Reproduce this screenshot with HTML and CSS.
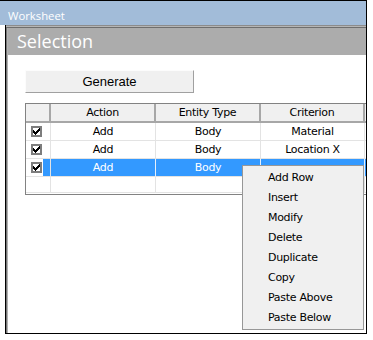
FILE: index.html
```html
<!DOCTYPE html>
<html>
<head>
<meta charset="utf-8">
<link rel="stylesheet" href="styles.css">
</head>
<body>
<div class="window">
  <div class="titlebar">Worksheet</div>
  <div class="panel">
    <div class="panel-edge"></div>
    <div class="panel-head">Selection</div>
    <div class="panel-body">
      <button class="btn">Generate</button>
      <div class="grid">
        <div class="row head">
          <div class="c w0"></div>
          <div class="c w1">Action</div>
          <div class="c w2">Entity Type</div>
          <div class="c w3">Criterion</div>
          <div class="c w4"></div>
        </div>
        <div class="row">
          <div class="c w0 chk"><span class="cb"><svg width="7" height="7" viewBox="0 0 7 7"><path d="M6 0h1v1h-1zM5 1h2v1h-2zM0 2h1v1h-1zM4 2h3v1h-3zM0 3h2v1h-2zM3 3h3v1h-3zM0 4h5v1h-5zM1 5h3v1h-3zM2 6h1v1h-1z" fill="#000"/></svg></span></div>
          <div class="c w1">Add</div>
          <div class="c w2">Body</div>
          <div class="c w3">Material</div>
          <div class="c w4"></div>
        </div>
        <div class="row">
          <div class="c w0 chk"><span class="cb"><svg width="7" height="7" viewBox="0 0 7 7"><path d="M6 0h1v1h-1zM5 1h2v1h-2zM0 2h1v1h-1zM4 2h3v1h-3zM0 3h2v1h-2zM3 3h3v1h-3zM0 4h5v1h-5zM1 5h3v1h-3zM2 6h1v1h-1z" fill="#000"/></svg></span></div>
          <div class="c w1">Add</div>
          <div class="c w2">Body</div>
          <div class="c w3">Location X</div>
          <div class="c w4"></div>
        </div>
        <div class="row sel">
          <div class="c w0 chk"><span class="cb"><svg width="7" height="7" viewBox="0 0 7 7"><path d="M6 0h1v1h-1zM5 1h2v1h-2zM0 2h1v1h-1zM4 2h3v1h-3zM0 3h2v1h-2zM3 3h3v1h-3zM0 4h5v1h-5zM1 5h3v1h-3zM2 6h1v1h-1z" fill="#000"/></svg></span></div>
          <div class="c w1">Add</div>
          <div class="c w2">Body</div>
          <div class="c w3"></div>
          <div class="c w4"></div>
        </div>
        <div class="row empty">
          <div class="c w0"></div>
          <div class="c w1"></div>
          <div class="c w2"></div>
          <div class="c w3"></div>
          <div class="c w4"></div>
        </div>
      </div>
    </div>
  </div>
</div>
<div class="menu">
  <div class="mi">Add Row</div>
  <div class="mi">Insert</div>
  <div class="mi">Modify</div>
  <div class="mi">Delete</div>
  <div class="mi">Duplicate</div>
  <div class="mi">Copy</div>
  <div class="mi">Paste Above</div>
  <div class="mi">Paste Below</div>
</div>
</body>
</html>
```
FILE: styles.css
```css
html, body {
  margin: 0;
  padding: 0;
  background: #fff;
}
body {
  width: 373px;
  height: 340px;
  position: relative;
  overflow: hidden;
}
.window {
  width: 366px;
  border-top: 1px solid #000;
  border-right: 1px solid #000;
}
.titlebar {
  height: 19px;
  padding-top: 5px;
  line-height: 19px;
  padding-left: 8px;
  background: #a2bcd9;
  color: #fff;
  font-family: "Open Sans", sans-serif;
  font-size: 11.3px;
}
.panel {
  margin-left: 5px;
  border-left: 1px solid #000;
  border-bottom: 1px solid #000;
  height: 308px;
  padding-left: 2px;
  background: linear-gradient(to right, #767676 0 1px, #b2b2b2 1px 2px);
  display: flex;
  flex-direction: column;
}
.panel-edge {
  height: 3px;
  margin-left: -2px;
  background: linear-gradient(#8c8c8c 0 1px, #b5b5b5 1px 2px, #6e6e6e 2px 3px);
}
.panel-head {
  height: 27px;
  line-height: 27px;
  padding-left: 9px;
  background: #acacac;
  color: #fff;
  font-family: "Open Sans", sans-serif;
  font-size: 18px;
}
.panel-body {
  flex: 1;
  background: #fff;
  padding: 15px 0 0 17px;
  overflow: hidden;
}
.btn {
  display: block;
  width: 169px;
  height: 23px;
  padding: 0;
  margin: 0;
  background: #f0f0f0;
  border: 1px solid;
  border-color: #fcfcfc #a0a0a0 #a0a0a0 #fcfcfc;
  font-family: "Liberation Sans", Arial, sans-serif;
  font-size: 13px;
  color: #000;
}
.grid {
  margin-top: 10px;
  width: 400px;
  height: 90px;
  border: 1px solid #828282;
  border-right: none;
  overflow: hidden;
  font-family: "DejaVu Sans", sans-serif;
  font-size: 11px;
  letter-spacing: -0.3px;
  color: #000;
}
.row {
  display: flex;
  height: 18px;
}
.row.head { height: 19px; }
.row.empty { height: 16px; }
.c {
  flex: none;
  box-sizing: border-box;
  border-right: 1px solid #e3e3e3;
  border-bottom: 1px solid #e3e3e3;
  text-align: center;
  padding-top: 1px;
  line-height: 16px;
  white-space: nowrap;
  overflow: hidden;
}
.w0 { width: 25px; }
.w1 { width: 105px; }
.w2 { width: 105px; }
.w3 { width: 104px; }
.w4 { width: 61px; }
.head .c {
  background: #f0f0f0;
  border-right: 2px solid #a7a7a7;
  border-bottom: 2px solid #a7a7a7;
}
.empty .c { line-height: 14px; }
.chk {
  display: flex;
  align-items: center;
  padding-left: 5px;
  padding-top: 0;
}
.cb {
  display: block;
  width: 7px;
  height: 7px;
  border: 2px solid #7d7d7d;
  background: #fff;
}
.cb svg { display: block; }
.sel .c {
  background: #3399ff;
  color: #fff;
  border-right-color: #e6f0fb;
}
.sel .chk {
  background: linear-gradient(to right, #fff 17px, #3399ff 17px);
  border-right-color: #e3e3e3;
}
.menu {
  position: absolute;
  left: 242px;
  top: 165px;
  width: 122px;
  box-sizing: border-box;
  border: 1px solid #979797;
  background: #f0f0f0;
  padding: 2px 0 1px;
  font-family: "DejaVu Sans", sans-serif;
  font-size: 11px;
  letter-spacing: -0.3px;
  color: #000;
}
.mi {
  height: 20px;
  line-height: 20px;
  padding-left: 25px;
}
```
